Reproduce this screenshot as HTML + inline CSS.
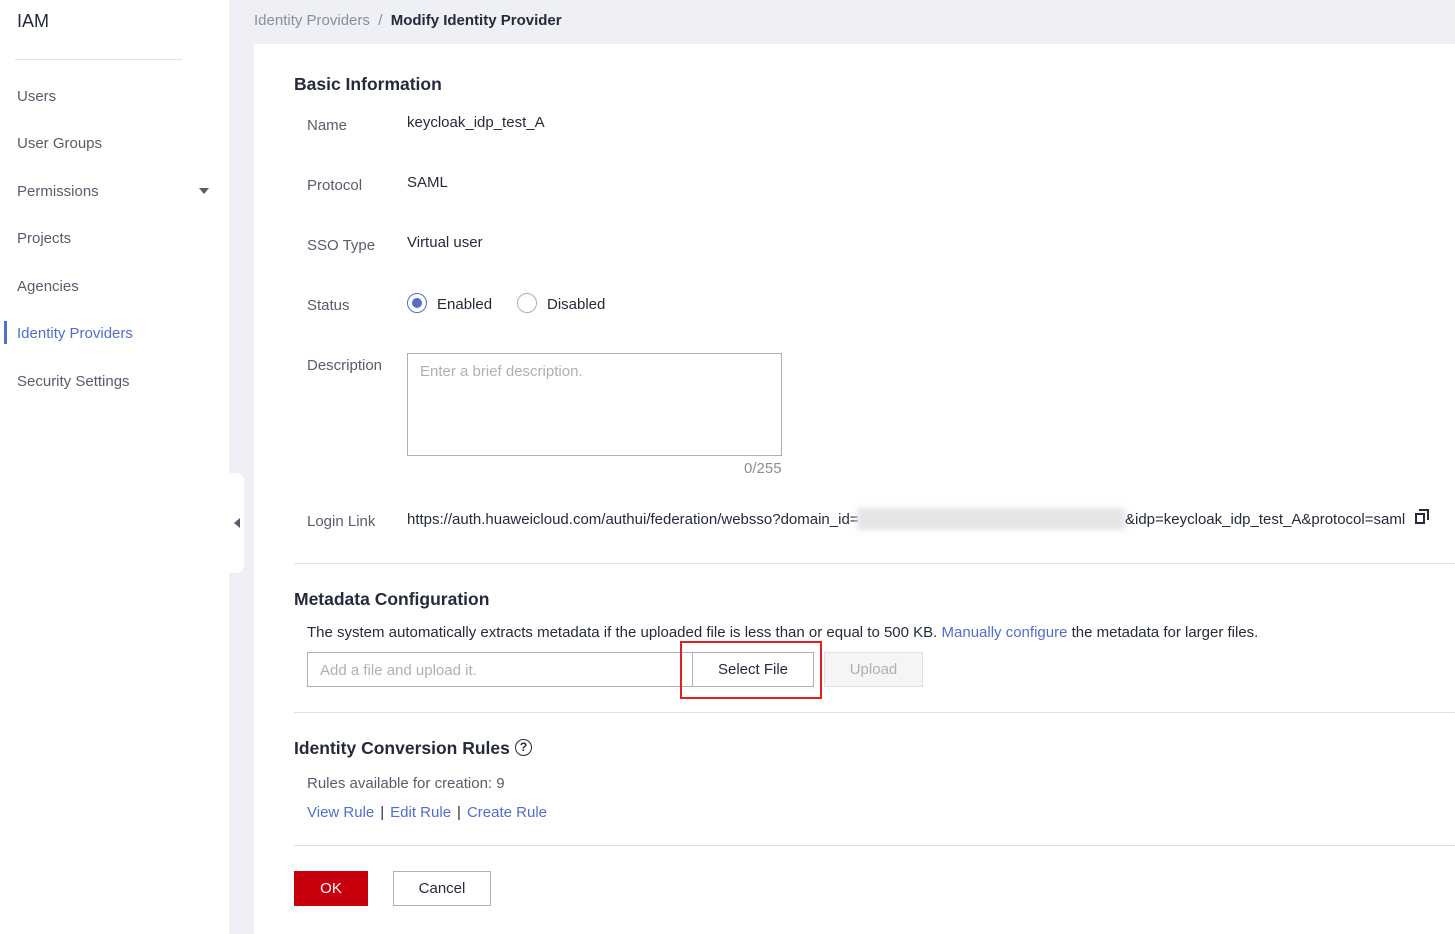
<!DOCTYPE html>
<html><head><meta charset="utf-8"><style>
*{margin:0;padding:0;box-sizing:border-box}
body{width:1455px;height:934px;overflow:hidden;background:#eef0f5;font-family:"Liberation Sans",Arial,sans-serif;font-size:15px;color:#252b3a;position:relative}
.a{position:absolute;white-space:nowrap}
.side{position:absolute;left:0;top:0;width:229px;height:934px;background:#fff}
.nav{position:absolute;left:17px;font-size:15px;color:#575d6c}
.lbl{position:absolute;left:307px;color:#575d6c}
.val{position:absolute;left:407px;color:#252b3a}
.card{position:absolute;left:254px;top:44px;width:1201px;height:890px;background:#fff}
h2{position:absolute;font-size:17.5px;font-weight:bold;color:#252b3a;left:294px;white-space:nowrap}
.hr{position:absolute;left:294px;right:0;height:1px;background:#dfe1e6}
.link{color:#526ecc}
</style></head><body>
<div class="side">
<div class="a" style="left:17px;top:11px;font-size:18px;color:#252b3a">IAM</div>
<div class="a" style="left:15px;top:59px;width:167px;height:1px;background:#dfe1e6"></div>
<div class="nav" style="top:88px">Users</div>
<div class="nav" style="top:135px">User Groups</div>
<div class="nav" style="top:183px">Permissions</div>
<div class="a" style="left:199px;top:188px;width:0;height:0;border-left:5px solid transparent;border-right:5px solid transparent;border-top:6px solid #575d6c"></div>
<div class="nav" style="top:230px">Projects</div>
<div class="nav" style="top:278px">Agencies</div>
<div class="a" style="left:4px;top:321px;width:3px;height:23px;background:#526ecc"></div>
<div class="nav" style="top:325px;color:#526ecc">Identity Providers</div>
<div class="nav" style="top:373px">Security Settings</div>
</div>
<div class="a" style="left:229px;top:473px;width:15px;height:100px;background:#fff;border-radius:0 8px 8px 0"></div>
<div class="a" style="left:234px;top:518px;width:0;height:0;border-top:5px solid transparent;border-bottom:5px solid transparent;border-right:6px solid #575d6c"></div>
<div class="a" style="left:254px;top:12px;color:#8a8e99">Identity Providers&nbsp; /&nbsp; <b style="color:#252b3a">Modify Identity Provider</b></div>
<div class="card"></div>
<h2 style="top:74px">Basic Information</h2>
<div class="lbl" style="top:117px">Name</div><div class="val" style="top:114px">keycloak_idp_test_A</div>
<div class="lbl" style="top:177px">Protocol</div><div class="val" style="top:174px">SAML</div>
<div class="lbl" style="top:237px">SSO Type</div><div class="val" style="top:234px">Virtual user</div>
<div class="lbl" style="top:297px">Status</div>
<div class="a" style="left:407px;top:293px;width:20px;height:20px;border:1px solid #526ecc;border-radius:50%"></div>
<div class="a" style="left:412px;top:298px;width:10px;height:10px;background:#526ecc;border-radius:50%"></div>
<div class="a" style="left:437px;top:296px">Enabled</div>
<div class="a" style="left:517px;top:293px;width:20px;height:20px;border:1px solid #adb0b8;border-radius:50%"></div>
<div class="a" style="left:547px;top:296px">Disabled</div>
<div class="lbl" style="top:357px">Description</div>
<div class="a" style="left:407px;top:353px;width:375px;height:103px;border:1px solid #adb0b8"></div>
<div class="a" style="left:420px;top:363px;color:#adb0b8">Enter a brief description.</div>
<div class="a" style="left:744px;top:460px;color:#8a8e99">0/255</div>
<div class="lbl" style="top:513px">Login Link</div>
<div class="val" style="top:511px">https://auth.huaweicloud.com/authui/federation/websso?domain_id=</div>
<div class="a" style="left:857px;top:508px;width:268px;height:22px;background:#e4e5e7;filter:blur(3px)"></div>
<div class="a" style="left:1125px;top:511px">&amp;idp=keycloak_idp_test_A&amp;protocol=saml</div>
<div class="a" style="left:1415px;top:513px;width:10px;height:11px;border:2px solid #252b3a"></div>
<div class="a" style="left:1419px;top:509px;width:10px;height:11px;border-top:2px solid #252b3a;border-right:2px solid #252b3a"></div>
<div class="hr" style="top:563px"></div>
<h2 style="top:589px">Metadata Configuration</h2>
<div class="a" style="left:307px;top:624px">The system automatically extracts metadata if the uploaded file is less than or equal to 500 KB. <span class="link">Manually configure</span> the metadata for larger files.</div>
<div class="a" style="left:307px;top:652px;width:393px;height:35px;border:1px solid #adb0b8"></div>
<div class="a" style="left:320px;top:662px;color:#adb0b8">Add a file and upload it.</div>
<div class="a" style="left:692px;top:652px;width:122px;height:35px;border:1px solid #adb0b8;background:#fff;text-align:center;line-height:34px">Select File</div>
<div class="a" style="left:680px;top:641px;width:142px;height:58px;border:2px solid #e0201f"></div>
<div class="a" style="left:824px;top:652px;width:99px;height:35px;border:1px solid #dfe1e6;background:#f5f5f6;color:#adb0b8;text-align:center;line-height:34px">Upload</div>
<div class="hr" style="top:712px"></div>
<h2 style="top:738px">Identity Conversion Rules</h2>
<div class="a" style="left:515px;top:739px;width:17px;height:17px;border:1.5px solid #252b3a;border-radius:50%;font-size:12px;font-weight:bold;text-align:center;line-height:15px">?</div>
<div class="a" style="left:307px;top:775px;color:#575d6c">Rules available for creation: 9</div>
<div class="a" style="left:307px;top:804px"><span class="link">View Rule</span><span style="margin:0 6px">|</span><span class="link">Edit Rule</span><span style="margin:0 6px">|</span><span class="link">Create Rule</span></div>
<div class="hr" style="top:845px"></div>
<div class="a" style="left:294px;top:871px;width:74px;height:35px;background:#c7000b;color:#fff;text-align:center;line-height:36px">OK</div>
<div class="a" style="left:393px;top:871px;width:98px;height:35px;border:1px solid #adb0b8;text-align:center;line-height:34px">Cancel</div>
</body></html>
